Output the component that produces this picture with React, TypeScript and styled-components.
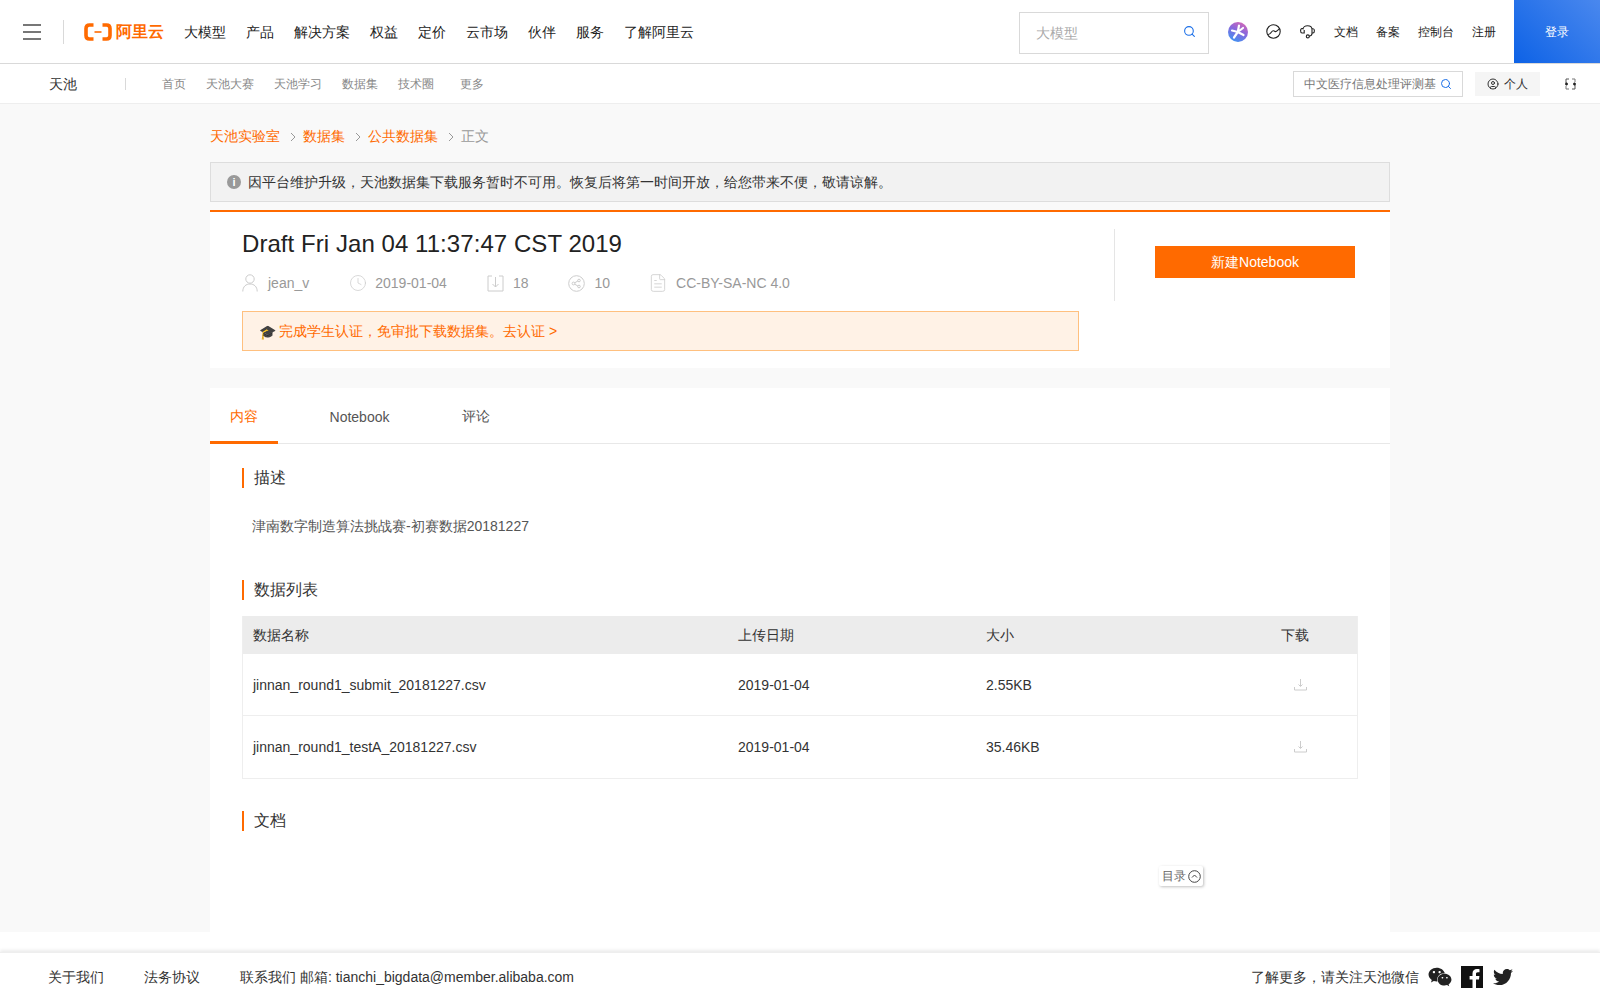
import React from "react";
import styled, { createGlobalStyle } from "styled-components";
import { Search, Clock, FileText, CircleUser } from "lucide-react";
import { FaTwitter, FaWeixin } from "react-icons/fa";

const GlobalStyle = createGlobalStyle`
  html, body {
    margin: 0;
    padding: 0;
    background: #fff;
    font-family: "Liberation Sans", sans-serif;
    color: #333;
  }
  * { box-sizing: border-box; }
`;

const orange = "#ff6a00";

const Page = styled.div`
  width: 1600px;
  height: 1000px;
  overflow: hidden;
  display: flex;
  flex-direction: column;
`;

const TopBar = styled.header`
  height: 64px;
  flex: none;
  display: flex;
  align-items: center;
  border-bottom: 1px solid #d9d9d9;
  background: #fff;
`;

const Burger = styled.div`
  width: 18px;
  margin-left: 23px;
  display: flex;
  flex-direction: column;
  gap: 5px;
  span {
    display: block;
    height: 2px;
    background: #777;
  }
`;

const TopDivider = styled.div`
  width: 1px;
  height: 24px;
  background: #d9d9d9;
  margin-left: 22px;
`;

const Logo = styled.div`
  display: flex;
  align-items: center;
  margin-left: 20px;
  gap: 4px;
  color: ${orange};
  font-size: 16px;
  font-weight: 700;
  line-height: 24px;
`;

const MainNav = styled.nav`
  display: flex;
  gap: 20px;
  margin: 2px 0 0 20px;
  font-size: 14px;
  color: #222;
`;

const TopSearch = styled.div`
  width: 190px;
  height: 42px;
  margin: 2px 0 0 auto;
  border: 1px solid #d9d9d9;
  display: flex;
  align-items: center;
  justify-content: space-between;
  padding: 2px 12px 0 16px;
  font-size: 14px;
  color: #aaa;
  svg { color: #1b6fe8; margin-top: -4px; }
`;

const TopTools = styled.div`
  display: flex;
  align-items: center;
  margin: 0 0 0 19px;
  font-size: 12px;
  color: #222;
`;

const ToolIcon = styled.span<{ $gap: number }>`
  display: flex;
  margin-right: ${(p) => p.$gap}px;
`;

const ToolLink = styled.span<{ $gap: number }>`
  margin: 2px ${(p) => p.$gap}px 0 0;
`;

const Login = styled.div`
  width: 86px;
  height: 63px;
  display: flex;
  align-items: center;
  justify-content: center;
  padding-top: 2px;
  color: #fff;
  font-size: 12px;
  background: linear-gradient(45deg, #0d62e6, #4a88ee);
`;

const SubBar = styled.div`
  height: 40px;
  flex: none;
  display: flex;
  align-items: center;
  background: #fff;
  border-bottom: 1px solid #eee;
`;

const SubTitle = styled.div`
  margin: 2px 0 0 49px;
  width: 76px;
  font-size: 14px;
  color: #333;
`;

const SubDivider = styled.div`
  width: 1px;
  height: 12px;
  background: #d9d9d9;
`;

const SubNav = styled.nav`
  display: flex;
  margin: 2px 0 0 36px;
  font-size: 12px;
  color: #888;
`;

const SubLink = styled.span<{ $gap: number }>`
  margin-right: ${(p) => p.$gap}px;
`;

const SubSearch = styled.div`
  width: 170px;
  height: 26px;
  margin-left: auto;
  border: 1px solid #d9d9d9;
  display: flex;
  align-items: center;
  justify-content: space-between;
  padding: 2px 10px 0;
  font-size: 12px;
  color: #777;
  white-space: nowrap;
  overflow: hidden;
  svg { color: #1b6fe8; flex: none; margin-top: -2px; }
`;

const Personal = styled.div`
  width: 65px;
  height: 24px;
  margin-left: 12px;
  background: #f5f5f5;
  display: flex;
  align-items: center;
  justify-content: center;
  gap: 5px;
  padding-top: 1px;
  font-size: 12px;
  color: #333;
`;

const SwitchIcon = styled.span`
  display: flex;
  margin: 0 24px 0 25px;
`;

const Main = styled.main`
  height: 828px;
  flex: none;
  background: #f9f9f9;
  display: flex;
  flex-direction: column;
  align-items: center;
`;

const Column = styled.div`
  width: 1180px;
  flex: 1;
  display: flex;
  flex-direction: column;
`;

const Crumbs = styled.div`
  height: 58px;
  flex: none;
  display: flex;
  align-items: center;
  padding-top: 8px;
  font-size: 14px;
  color: #999;
`;

const Crumb = styled.span`
  color: ${orange};
`;

const CrumbArrow = styled.svg`
  margin: 0 7px 0 10px;
`;

const Notice = styled.div`
  height: 40px;
  flex: none;
  background: #f2f2f2;
  border: 1px solid #ddd;
  display: flex;
  align-items: center;
  gap: 7px;
  padding: 2px 0 0 16px;
  font-size: 14px;
  color: #333;
`;

const InfoDot = styled.span`
  width: 14px;
  height: 14px;
  margin-top: -2px;
  border-radius: 50%;
  background: #999;
  color: #fff;
  font-size: 11px;
  font-weight: 700;
  line-height: 14px;
  text-align: center;
`;

const HeadCard = styled.section`
  height: 158px;
  flex: none;
  margin-top: 8px;
  background: #fff;
  border-top: 2px solid ${orange};
  display: flex;
  padding-left: 32px;
`;

const HeadLeft = styled.div`
  width: 837px;
`;

const Title = styled.h1`
  margin: 17px 0 0;
  font-size: 24px;
  font-weight: 400;
  line-height: 30px;
  letter-spacing: 0.06px;
  color: #222;
`;

const Meta = styled.div`
  display: flex;
  margin-top: 12px;
  height: 24px;
  align-items: center;
  font-size: 14px;
  color: #999;
`;

const MetaItem = styled.span<{ $gap: number }>`
  display: flex;
  align-items: center;
  gap: ${(p) => p.$gap}px;
  margin-right: 40px;
  svg { color: #ccc; flex: none; }
`;

const LicenceIcon = styled(FileText)`
  margin-left: -2px;
`;

const CertTip = styled.div`
  height: 40px;
  margin-top: 16px;
  background: #fff2e6;
  border: 1px solid #ffc07f;
  display: flex;
  align-items: center;
  gap: 3px;
  padding: 2px 0 0 16px;
  font-size: 14px;
  color: ${orange};
`;

const Cap = styled.span`
  color: #333;
`;

const HeadRight = styled.div`
  margin: 17px 0 0 35px;
  height: 72px;
  border-left: 1px solid #e5e5e5;
  padding: 17px 0 0 40px;
`;

const NewButton = styled.div`
  width: 200px;
  height: 32px;
  background: ${orange};
  color: #fff;
  font-size: 14px;
  padding-top: 2px;
  display: flex;
  align-items: center;
  justify-content: center;
`;

const BodyCard = styled.section`
  flex: 1;
  margin-top: 20px;
  background: #fff;
  position: relative;
`;

const Tabs = styled.div`
  height: 56px;
  display: flex;
  border-bottom: 1px solid #e8e8e8;
  font-size: 14px;
  color: #555;
`;

const Tab = styled.div<{ $active?: boolean; $width: number }>`
  width: ${(p) => p.$width}px;
  height: 56px;
  padding-top: 4px;
  display: flex;
  align-items: center;
  justify-content: center;
  color: ${(p) => (p.$active ? orange : "#555")};
  border-bottom: 3px solid ${(p) => (p.$active ? orange : "transparent")};
`;

const Content = styled.div`
  padding: 24px 32px 0;
`;

const SectionHead = styled.h3`
  margin: 0;
  height: 20px;
  border-left: 2px solid ${orange};
  padding-left: 10px;
  font-size: 16px;
  font-weight: 400;
  line-height: 20px;
  color: #333;
`;

const Desc = styled.p`
  margin: 28px 0 44px 10px;
  font-size: 14px;
  line-height: 20px;
  color: #555;
`;

const Table = styled.div`
  margin-top: 16px;
  border: 1px solid #eee;
  border-top: 0;
  font-size: 14px;
  color: #333;
`;

const Row = styled.div<{ $head?: boolean }>`
  display: grid;
  grid-template-columns: 485px 248px 295px 87px;
  align-items: center;
  padding: ${(p) => (p.$head ? "2px" : "0")} 0 0 10px;
  height: ${(p) => (p.$head ? "38px" : "62px")};
  background: ${(p) => (p.$head ? "#ececec" : "#fff")};
  border-bottom: ${(p) => (p.$head ? "0" : "1px solid #eee")};
  &:last-child { border-bottom: 0; }
`;

const HeadCell = styled.div`
  text-align: left;
`;

const IconCell = styled.div`
  display: flex;
  padding-left: 13px;
`;

const DocHead = styled(SectionHead)`
  margin-top: 32px;
`;

const TocButton = styled.div`
  position: absolute;
  left: 949px;
  top: 478px;
  width: 44px;
  height: 20px;
  background: #fff;
  border-radius: 2px;
  box-shadow: 1px 1px 3px rgba(0, 0, 0, 0.25);
  display: flex;
  align-items: center;
  justify-content: center;
  gap: 2px;
  font-size: 12px;
  color: #666;
`;

const Footer = styled.footer`
  height: 48px;
  margin-top: 20px;
  flex: none;
  display: flex;
  align-items: center;
  padding: 2px 0 0 48px;
  font-size: 14px;
  color: #333;
  box-shadow: 0 -2px 3px rgba(0, 0, 0, 0.08);
  border-top: 1px solid #eee;
`;

const FooterLink = styled.span`
  margin-right: 40px;
`;

const FooterRight = styled.div`
  margin-left: auto;
  margin-right: 87px;
  display: flex;
  align-items: center;
  gap: 9px;
  svg { color: #222; display: block; margin-top: -2px; }
  svg:last-child { margin-left: 1px; }
`;

const LogoMark = () => (
  <svg width="28" height="18" viewBox="0 0 28 18" fill="none">
    <path d="M9.5 2H5.5Q2 2 2 5.5V12.5Q2 16 5.5 16H9.5" stroke={orange} strokeWidth="3.6" />
    <path d="M18.5 2H22.5Q26 2 26 5.5V12.5Q26 16 22.5 16H18.5" stroke={orange} strokeWidth="3.6" />
    <path d="M10.5 9H17.5" stroke={orange} strokeWidth="1.6" />
  </svg>
);

const SparkIcon = () => (
  <svg width="20" height="20" viewBox="0 0 20 20">
    <defs>
      <linearGradient id="spark" x1="0.8" y1="0" x2="0.3" y2="1">
        <stop offset="0" stopColor="#d968b4" />
        <stop offset="0.45" stopColor="#8a67dc" />
        <stop offset="1" stopColor="#3f93f2" />
      </linearGradient>
    </defs>
    <circle cx="10" cy="10" r="10" fill="url(#spark)" />
    <path d="M11 3.5L9.8 10L6 15.5M9.8 10L15.5 13M9.8 10L4 8.5M9.8 10L15 6" stroke="#fff" strokeWidth="2.2" strokeLinecap="round" fill="none" />
  </svg>
);

const GlobeIcon = () => (
  <svg width="15" height="15" viewBox="0 0 15 15" fill="none" stroke="#222" strokeWidth="1.1">
    <circle cx="7.5" cy="7.5" r="6.7" />
    <path d="M1.6 10.5C3.5 11 4.5 9.5 5.5 8C6.5 6.5 8 6.5 9 7.5C10.5 8.5 11.5 6 13.6 4.8" />
  </svg>
);

const HeadsetIcon = () => (
  <svg width="15" height="15" viewBox="0 0 15 15" fill="none" stroke="#222" strokeWidth="1.1">
    <path d="M3 5.5C3 0.5 12 0.5 12 5.5V9.5C12 11 10.5 12 9 12.2" />
    <path d="M3 4.5H2C1 4.5 0.6 5.5 0.6 6.8C0.6 8.2 1.2 9 2 9H4.2V6" />
    <path d="M12 4.8H13C14 4.8 14.4 5.6 14.4 6.8C14.4 8 14 9 13 9H12" />
    <circle cx="7.8" cy="12.4" r="1.5" />
  </svg>
);

const SwitchGlyph = () => (
  <svg width="11" height="12" viewBox="0 0 11 12" fill="none">
    <path d="M1 5V1H4M10 7V11H7" stroke="#555" strokeWidth="1" />
    <path d="M7 1H10V4M4 11H1V8" stroke="#777" strokeWidth="1" />
    <path d="M0 6H3M1.5 4.5V7.5M8 6H11M9.5 4.5V7.5" stroke="#222" strokeWidth="1.3" />
  </svg>
);

const Arrow = () => (
  <CrumbArrow width="6" height="10" viewBox="0 0 6 10" fill="none" stroke="#999" strokeWidth="1">
    <path d="M1 1L5 5L1 9" />
  </CrumbArrow>
);

const PersonIcon = () => (
  <svg width="16" height="18" viewBox="0 0 16 18" fill="none" stroke="currentColor" strokeWidth="1">
    <circle cx="8" cy="5" r="4.2" />
    <path d="M0.8 17.5C0.8 12.5 4 10 8 10C12 10 15.2 12.5 15.2 17.5" />
  </svg>
);

const BoxDownIcon = () => (
  <svg width="17" height="17" viewBox="0 0 17 17" fill="none" stroke="currentColor" strokeWidth="1">
    <path d="M5 1H1V16H16V1H12" />
    <path d="M8.5 2V12M5.5 9L8.5 12L11.5 9" />
  </svg>
);

const ShareCircleIcon = () => (
  <svg width="17" height="17" viewBox="0 0 17 17" fill="none" stroke="currentColor" strokeWidth="1">
    <circle cx="8.5" cy="8.5" r="7.8" />
    <circle cx="5.5" cy="8.5" r="1.4" />
    <circle cx="11" cy="5.5" r="1.3" />
    <circle cx="11" cy="11.5" r="1.3" />
    <path d="M6.7 7.8L9.9 6M6.7 9.2L9.9 11" />
  </svg>
);

const TrayDownIcon = () => (
  <svg width="13" height="12" viewBox="0 0 13 12" fill="none" stroke="#ccc" strokeWidth="1">
    <path d="M6.5 0V7M4.5 5.5L6.5 7.5L8.5 5.5" />
    <path d="M0.5 8V11H12.5V8" />
  </svg>
);

const TocIcon = () => (
  <svg width="13" height="13" viewBox="0 0 13 13" fill="none" stroke="#444" strokeWidth="1">
    <circle cx="6.5" cy="6.5" r="5.8" />
    <path d="M4 7.5L6.5 5L9 7.5" />
  </svg>
);

const FacebookIcon = () => (
  <svg width="22" height="22" viewBox="0 0 22 22">
    <rect width="22" height="22" fill="#111" />
    <path d="M15 22V13.5H18L18.4 10H15V8C15 7 15.4 6.2 16.8 6.2H18.5V3.2C18 3.1 17 3 15.9 3C13.3 3 11.5 4.6 11.5 7.5V10H8.6V13.5H11.5V22Z" fill="#fff" />
  </svg>
);

const nav = ["大模型", "产品", "解决方案", "权益", "定价", "云市场", "伙伴", "服务", "了解阿里云"];

const files = [
  { name: "jinnan_round1_submit_20181227.csv", date: "2019-01-04", size: "2.55KB" },
  { name: "jinnan_round1_testA_20181227.csv", date: "2019-01-04", size: "35.46KB" },
];

export default function App() {
  return (
    <Page>
      <GlobalStyle />
      <TopBar>
        <Burger>
          <span />
          <span />
          <span />
        </Burger>
        <TopDivider />
        <Logo>
          <LogoMark />
          阿里云
        </Logo>
        <MainNav>
          {nav.map((n) => (
            <span key={n}>{n}</span>
          ))}
        </MainNav>
        <TopSearch>
          大模型
          <Search size={13} />
        </TopSearch>
        <TopTools>
          <ToolIcon $gap={18}>
            <SparkIcon />
          </ToolIcon>
          <ToolIcon $gap={19}>
            <GlobeIcon />
          </ToolIcon>
          <ToolIcon $gap={19}>
            <HeadsetIcon />
          </ToolIcon>
          <ToolLink $gap={18}>文档</ToolLink>
          <ToolLink $gap={18}>备案</ToolLink>
          <ToolLink $gap={18}>控制台</ToolLink>
          <ToolLink $gap={18}>注册</ToolLink>
        </TopTools>
        <Login>登录</Login>
      </TopBar>
      <SubBar>
        <SubTitle>天池</SubTitle>
        <SubDivider />
        <SubNav>
          <SubLink $gap={20}>首页</SubLink>
          <SubLink $gap={20}>天池大赛</SubLink>
          <SubLink $gap={20}>天池学习</SubLink>
          <SubLink $gap={20}>数据集</SubLink>
          <SubLink $gap={26}>技术圈</SubLink>
          <SubLink $gap={0}>更多</SubLink>
        </SubNav>
        <SubSearch>
          中文医疗信息处理评测基
          <Search size={12} />
        </SubSearch>
        <Personal>
          <CircleUser size={12} />
          个人
        </Personal>
        <SwitchIcon>
          <SwitchGlyph />
        </SwitchIcon>
      </SubBar>
      <Main>
        <Column>
          <Crumbs>
            <Crumb>天池实验室</Crumb>
            <Arrow />
            <Crumb>数据集</Crumb>
            <Arrow />
            <Crumb>公共数据集</Crumb>
            <Arrow />
            正文
          </Crumbs>
          <Notice>
            <InfoDot>i</InfoDot>
            因平台维护升级，天池数据集下载服务暂时不可用。恢复后将第一时间开放，给您带来不便，敬请谅解。
          </Notice>
          <HeadCard>
            <HeadLeft>
              <Title>Draft Fri Jan 04 11:37:47 CST 2019</Title>
              <Meta>
                <MetaItem $gap={10}>
                  <PersonIcon />
                  jean_v
                </MetaItem>
                <MetaItem $gap={8}>
                  <Clock size={18} strokeWidth={1} />
                  2019-01-04
                </MetaItem>
                <MetaItem $gap={9}>
                  <BoxDownIcon />
                  18
                </MetaItem>
                <MetaItem $gap={9}>
                  <ShareCircleIcon />
                  10
                </MetaItem>
                <MetaItem $gap={8}>
                  <LicenceIcon size={20} strokeWidth={1} />
                  CC-BY-SA-NC 4.0
                </MetaItem>
              </Meta>
              <CertTip>
                <Cap>🎓</Cap>
                完成学生认证，免审批下载数据集。去认证 &gt;
              </CertTip>
            </HeadLeft>
            <HeadRight>
              <NewButton>新建Notebook</NewButton>
            </HeadRight>
          </HeadCard>
          <BodyCard>
            <Tabs>
              <Tab $active $width={68}>内容</Tab>
              <Tab $width={163}>Notebook</Tab>
              <Tab $width={69}>评论</Tab>
            </Tabs>
            <Content>
              <SectionHead>描述</SectionHead>
              <Desc>津南数字制造算法挑战赛-初赛数据20181227</Desc>
              <SectionHead>数据列表</SectionHead>
              <Table>
                <Row $head>
                  <HeadCell>数据名称</HeadCell>
                  <HeadCell>上传日期</HeadCell>
                  <HeadCell>大小</HeadCell>
                  <HeadCell>下载</HeadCell>
                </Row>
                {files.map((f) => (
                  <Row key={f.name}>
                    <div>{f.name}</div>
                    <div>{f.date}</div>
                    <div>{f.size}</div>
                    <IconCell>
                      <TrayDownIcon />
                    </IconCell>
                  </Row>
                ))}
              </Table>
              <DocHead>文档</DocHead>
            </Content>
            <TocButton>
              目录
              <TocIcon />
            </TocButton>
          </BodyCard>
        </Column>
      </Main>
      <Footer>
        <FooterLink>关于我们</FooterLink>
        <FooterLink>法务协议</FooterLink>
        <FooterLink>联系我们 邮箱: tianchi_bigdata@member.alibaba.com</FooterLink>
        <FooterRight>
          了解更多，请关注天池微信
          <FaWeixin size={24} />
          <FacebookIcon />
          <FaTwitter size={20} />
        </FooterRight>
      </Footer>
    </Page>
  );
}
